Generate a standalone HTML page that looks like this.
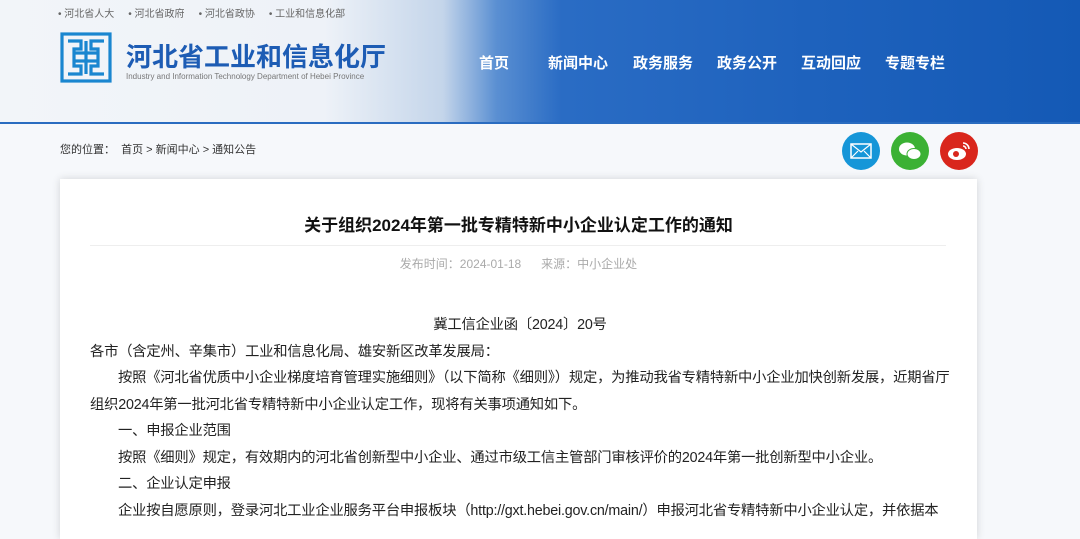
<!DOCTYPE html>
<html><head><meta charset="utf-8"><style>
*{margin:0;padding:0;box-sizing:border-box}
body{width:1080px;height:520px;overflow:hidden;background:#f6f8fb;font-family:"Liberation Sans","Noto Sans CJK SC",sans-serif;position:relative}
.hd{position:absolute;left:0;top:0;width:1080px;height:124px;background:linear-gradient(90deg,#f2f5f9 0%,#eef2f8 30%,#c4d5ea 41%,#5a8fd2 46%,#2a6cc4 52%,#1e62bd 75%,#1459b5 100%);border-bottom:2px solid #2a6cc0}
.top{position:absolute;left:58px;top:5px;font-size:10px;color:#666}
.top span{margin-right:14px}
.logo{position:absolute;left:60px;top:32px;width:52px;height:51px}
.t1{position:absolute;left:126px;top:37px;font-size:26px;font-weight:bold;color:#1d5cb4;white-space:nowrap}
.t2{position:absolute;left:126px;top:72px;font-size:8px;color:#777;white-space:nowrap}
.nav{position:absolute;top:52px;font-size:15px;font-weight:bold;color:#fff;white-space:nowrap}
.bc{position:absolute;left:60px;top:141px;font-size:11px;color:#333}
.ic{position:absolute;top:132px;width:38px;height:38px;border-radius:50%}
.card{position:absolute;left:60px;top:179px;width:917px;height:360px;background:#fff;box-shadow:0 0 8px rgba(0,0,0,.15)}
.title{position:absolute;left:0;width:917px;top:32px;text-align:center;font-size:17px;font-weight:bold;color:#111}
.hr{position:absolute;left:30px;width:856px;top:66px;border-top:1px solid #eee}
.meta{position:absolute;left:0;width:917px;top:76px;text-align:center;font-size:12px;color:#aaa}
.body{position:absolute;left:30px;top:133px;width:860px;font-size:14.3px;letter-spacing:-0.2px;line-height:26.5px;color:#222}
.body p{white-space:nowrap}
.in{text-indent:28px}
</style></head><body>
<div class="hd">
<div class="top"><span>• 河北省人大</span><span>• 河北省政府</span><span>• 河北省政协</span><span>• 工业和信息化部</span></div>
<svg class="logo" viewBox="0 0 52 51"><g fill="none" stroke="#1a86d0" stroke-width="3.2"><rect x="2" y="2" width="48" height="47"/><path d="M8 9h13v8h-7v17h7v8H8M44 9H31v8h7v17h-7v8h13M14 21h24M14 29h24M26 9v33"/></g></svg>
<div class="t1">河北省工业和信息化厅</div>
<div class="t2">Industry and Information Technology Department of Hebei Province</div>
<div class="nav" style="left:479px">首页</div>
<div class="nav" style="left:548px">新闻中心</div>
<div class="nav" style="left:633px">政务服务</div>
<div class="nav" style="left:717px">政务公开</div>
<div class="nav" style="left:801px">互动回应</div>
<div class="nav" style="left:885px">专题专栏</div>
</div>
<div class="bc">您的位置：&nbsp; 首页 &gt; 新闻中心 &gt; 通知公告</div>
<div class="ic" style="left:842px;background:#1696d8"><svg width="38" height="38"><rect x="9" y="12" width="20" height="14" fill="none" stroke="#fff" stroke-width="1.5"/><path d="M9 12l10 8 10-8M9 26l7-7M29 26l-7-7" fill="none" stroke="#fff" stroke-width="1.2"/></svg></div>
<div class="ic" style="left:891px;background:#3bb134"><svg width="38" height="38"><ellipse cx="16" cy="17" rx="8" ry="6.5" fill="#fff"/><ellipse cx="23" cy="22" rx="7" ry="5.5" fill="#fff" stroke="#3bb134" stroke-width="1"/></svg></div>
<div class="ic" style="left:940px;background:#d9261c"><svg width="38" height="38"><ellipse cx="17" cy="22" rx="9" ry="6" fill="#fff"/><circle cx="16" cy="22" r="3" fill="#d9261c"/><path d="M23 11a6 6 0 0 1 6 6M23 14a3 3 0 0 1 3 3" stroke="#fff" stroke-width="1.6" fill="none"/></svg></div>
<div class="card">
<div class="title">关于组织2024年第一批专精特新中小企业认定工作的通知</div>
<div class="hr"></div>
<div class="meta">发布时间：2024-01-18 &nbsp; &nbsp; &nbsp;来源：中小企业处</div>
<div class="body">
<p style="text-align:center">冀工信企业函〔2024〕20号</p>
<p>各市（含定州、辛集市）工业和信息化局、雄安新区改革发展局：</p>
<p class="in">按照《河北省优质中小企业梯度培育管理实施细则》（以下简称《细则》）规定，为推动我省专精特新中小企业加快创新发展，近期省厅</p>
<p>组织2024年第一批河北省专精特新中小企业认定工作，现将有关事项通知如下。</p>
<p class="in">一、申报企业范围</p>
<p class="in">按照《细则》规定，有效期内的河北省创新型中小企业、通过市级工信主管部门审核评价的2024年第一批创新型中小企业。</p>
<p class="in">二、企业认定申报</p>
<p class="in">企业按自愿原则，登录河北工业企业服务平台申报板块（http://gxt.hebei.gov.cn/main/）申报河北省专精特新中小企业认定，并依据本</p>
</div>
</div>
</body></html>
